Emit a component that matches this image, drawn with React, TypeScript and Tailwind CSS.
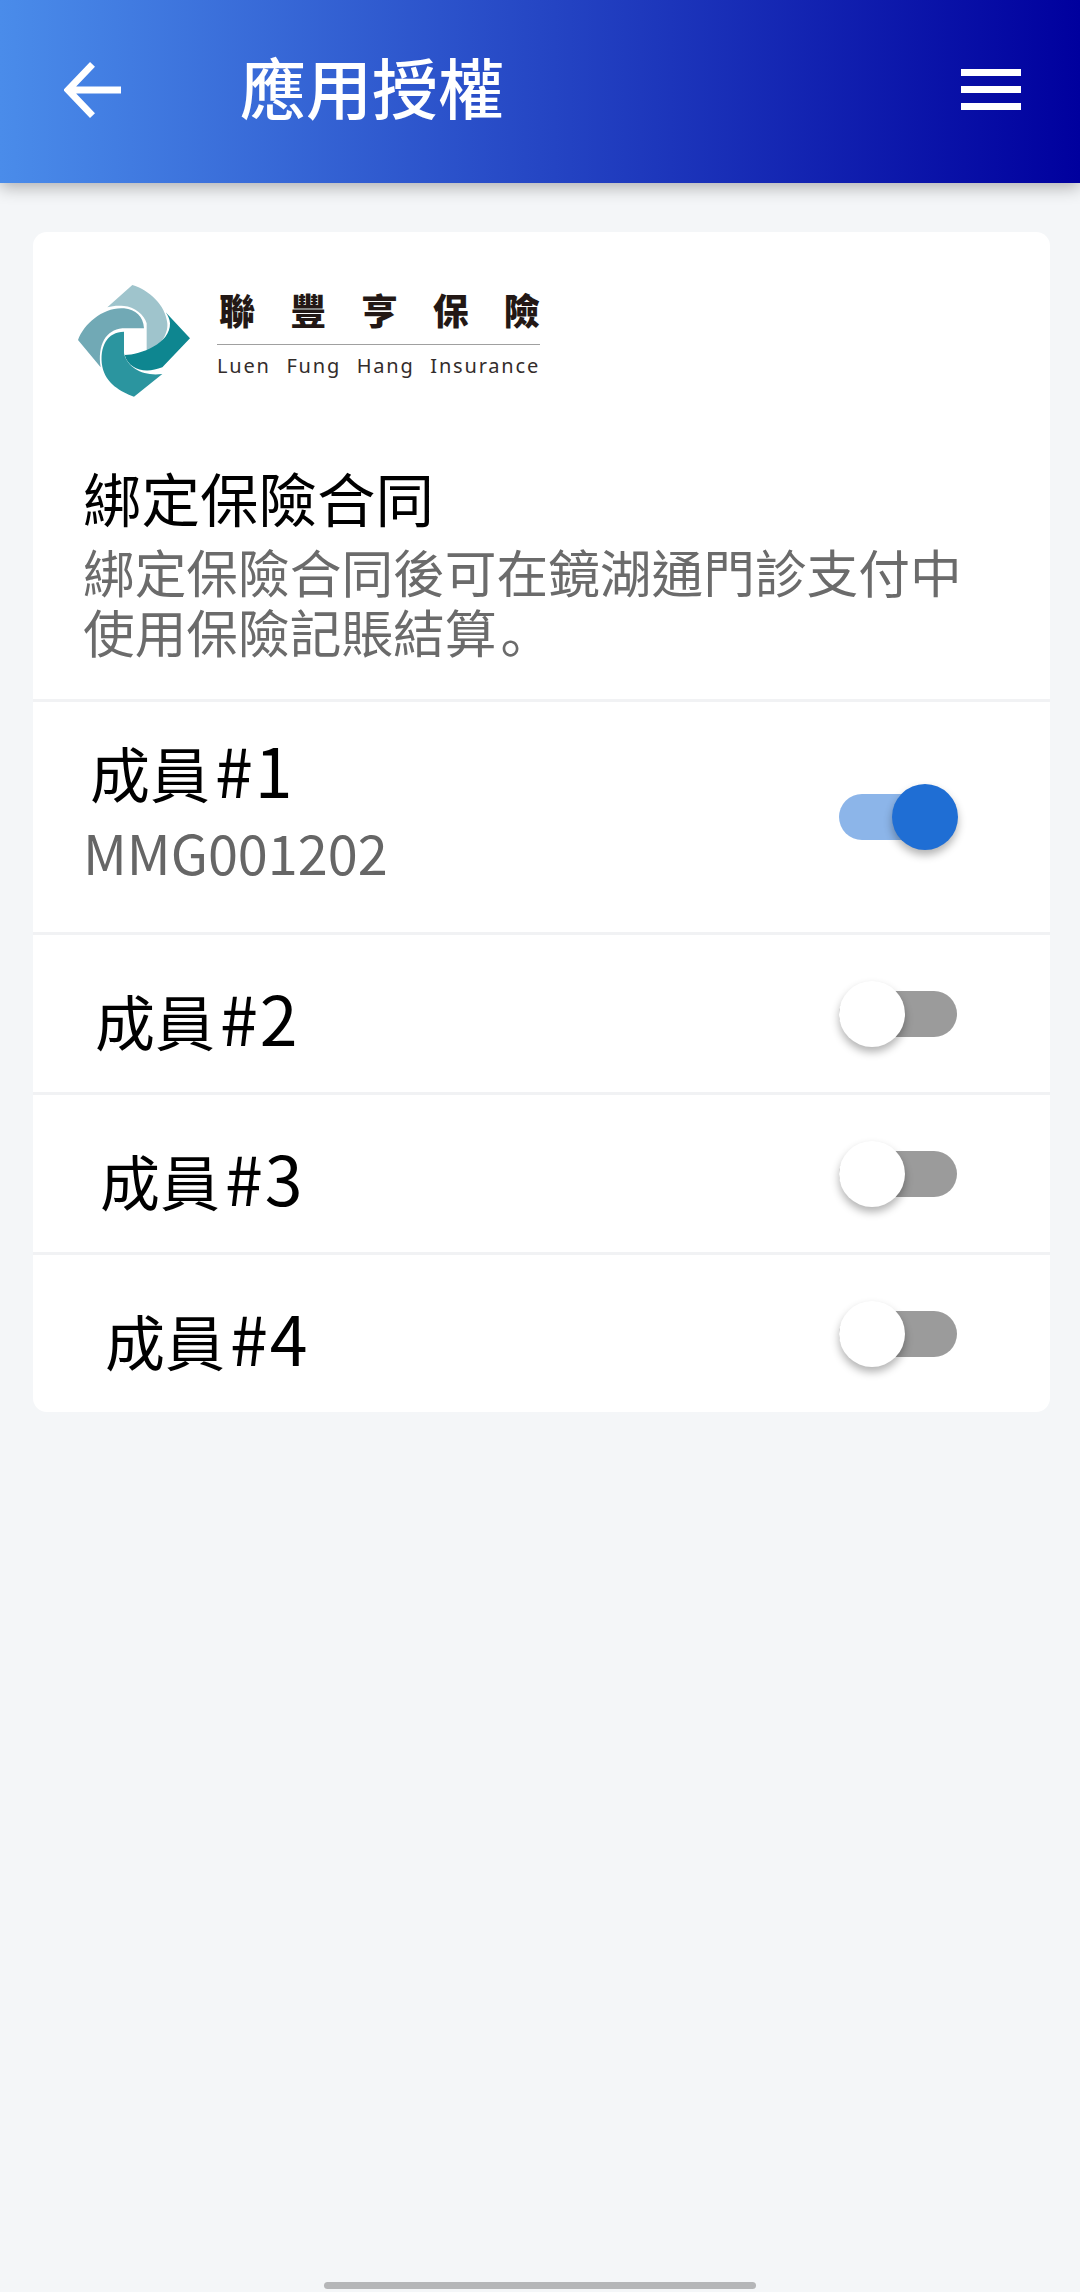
const LogoMark = () => (
  <svg viewBox="22 15 336 336" className="h-[112px] w-[112px]">
    <path d="M110 82 L185 15 C235 30 285 75 290 130 C293 165 265 205 228 212 L228 130 C222 105 190 80 160 78 C140 76 125 78 110 82 Z" fill="#9fc4cc" />
    <path d="M285 97 L358 175 L275 262 C225 282 175 270 162 225 C210 225 300 190 298 130 C297 118 293 108 285 97 Z" fill="#0e8690" />
    <path d="M22 180 C40 130 100 80 160 85 C195 88 218 110 220 145 L155 145 C105 150 80 195 90 262 Z" fill="#71a9b5" />
    <path d="M190 350 C150 335 105 310 95 260 C85 200 110 155 160 155 L160 220 C170 265 220 290 275 282 Z" fill="#2b959f" />
  </svg>
)

const Logo = () => (
  <div className="flex items-center gap-[27px] pl-[45px] pt-[53px]">
    <LogoMark />
    <div className="flex w-[323px] flex-col">
      <div className="flex h-[41px] justify-between pl-[2px] text-[36px] leading-[12px] font-black text-[#231815]">
        <span>聯</span>
        <span>豐</span>
        <span>亨</span>
        <span>保</span>
        <span>險</span>
      </div>
      <div className="h-px bg-[#a0a0a0]" />
      <div className="mt-[7px] flex justify-between font-['Noto_Sans',sans-serif] text-[20px] leading-[28px] tracking-[1.8px] text-[#332c2b]">
        <span>Luen</span>
        <span>Fung</span>
        <span>Hang</span>
        <span>Insurance</span>
      </div>
    </div>
  </div>
)

const Toggle = ({ on }: { on: boolean }) => (
  <div className={`relative h-[46px] w-[118px] rounded-full ${on ? "bg-[#8cb5e9]" : "bg-[#9b9b9b]"}`}>
    <div
      className={`absolute top-[-10px] h-[66px] w-[66px] rounded-full shadow-[0_5px_8px_rgba(0,0,0,0.3)] ${
        on ? "right-[-1px] bg-[#1f6ed4]" : "left-0 bg-white"
      }`}
    />
  </div>
)

const MemberName = ({ num }: { num: number }) => (
  <>
    成員<span className="ml-[5px] text-[68px] tracking-[2px]">#{num}</span>
  </>
)

const members = [
  { num: 2, indent: "pl-[62px]" },
  { num: 3, indent: "pl-[67px]" },
  { num: 4, indent: "pl-[72px]" },
]

export default function App() {
  return (
    <div className="flex min-h-screen flex-col bg-[#f4f6f8] font-['Noto_Sans_CJK_TC',sans-serif]">
      <header className="flex h-[183px] items-center bg-linear-to-r/srgb from-[#4a8cea] to-[#00009e] pb-[4px] pl-[64px] pr-[59px] text-white shadow-[0_4px_16px_rgba(0,0,0,0.3)]">
        <svg viewBox="0 0 58 56" className="h-[56px] w-[57px]" fill="none" stroke="white" strokeWidth="7">
          <path d="M58 28 H5 M29 2 L4 28 L29 54" />
        </svg>
        <h1 className="ml-[119px] pb-[10px] text-[66px] leading-none font-medium">應用授權</h1>
        <div className="ml-auto flex w-[60px] flex-col gap-[10px]">
          <div className="h-[7px] bg-white" />
          <div className="h-[7px] bg-white" />
          <div className="h-[7px] bg-white" />
        </div>
      </header>

      <main className="ml-[33px] mr-[30px] mt-[49px] overflow-hidden rounded-[14px] bg-white">
        <Logo />
        <div className="h-[302px] pl-[50px] pt-[62px]">
          <h2 className="text-[58.5px] leading-[76px] text-black">綁定保險合同</h2>
          <p className="mt-[6px] w-[900px] text-[51.7px] leading-[60px] text-[#6b6b6b]">
            綁定保險合同後可在鏡湖通門診支付中使用保險記賬結算
            <span className="ml-[4px] font-['Noto_Sans_CJK_SC',sans-serif]">。</span>
          </p>
        </div>

        <div className="flex h-[233px] items-center justify-between border-t-[3px] border-[#f1f2f4] pr-[93px]">
          <div className="pb-[20px] pl-[50px]">
            <div className="pl-[7px] text-[60px] leading-[70px] text-black">
              <MemberName num={1} />
            </div>
            <div className="mt-[16px] text-[54px] leading-[58px] text-[#666666]">MMG001202</div>
          </div>
          <Toggle on />
        </div>

        {members.map((m) => (
          <div key={m.num} className="flex h-[160px] items-center justify-between border-t-[3px] border-[#f1f2f4] pr-[93px]">
            <div className={`${m.indent} pt-[9px] text-[60px] leading-[70px] text-black`}>
              <MemberName num={m.num} />
            </div>
            <Toggle on={false} />
          </div>
        ))}
      </main>

      <div className="mt-auto flex justify-center pb-[3px]">
        <div className="h-[7px] w-[432px] rounded-[4px] bg-[#b5b6b8]" />
      </div>
    </div>
  )
}
